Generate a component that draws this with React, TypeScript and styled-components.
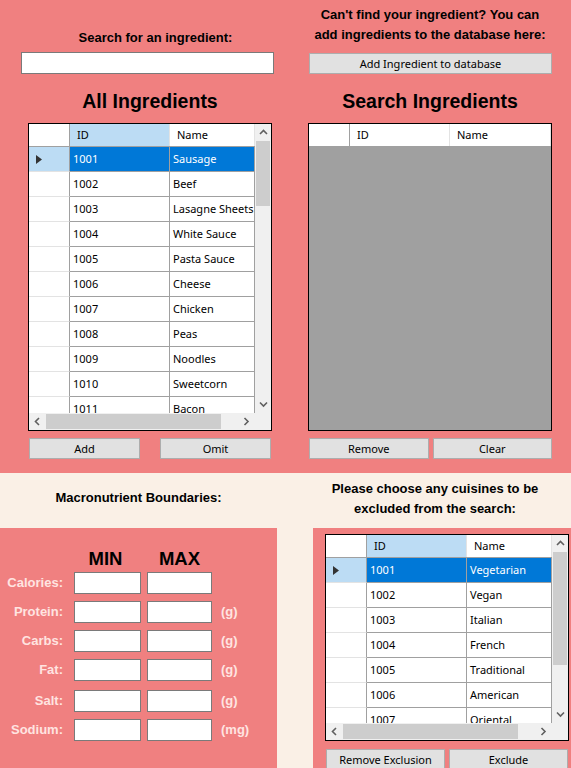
import React from "react";
import styled, { createGlobalStyle } from "styled-components";

const GlobalStyle = createGlobalStyle`
  body {
    margin: 0;
    font-family: "Noto Sans", sans-serif;
  }
  * {
    box-sizing: border-box;
  }
`;

const PINK = "#f08080";
const LINEN = "#faf0e6";
const GRID_LINE = "#a0a0a0";

const Page = styled.div`
  width: 571px;
  height: 768px;
  display: flex;
  flex-direction: column;
  background: ${LINEN};
  overflow: hidden;
`;

const TopSection = styled.div`
  height: 473px;
  flex-shrink: 0;
  background: ${PINK};
  display: grid;
  grid-template-columns: 290px 1fr;
`;

const Column = styled.div<{ $pad: number; $top?: number }>`
  display: flex;
  flex-direction: column;
  padding-left: ${p => p.$pad}px;
  padding-top: ${p => p.$top || 0}px;
`;

const Prompt = styled.div<{ $shift?: number }>`
  width: 244px;
  font: bold 13px/16px "Liberation Sans", Arial, sans-serif;
  color: #000;
  text-align: center;
  padding-left: ${p => p.$shift || 0}px;
`;

const TwoLinePrompt = styled(Prompt)`
  line-height: 20px;
`;

const SearchBox = styled.input`
  width: 253px;
  height: 22px;
  margin: 6px 0 0 -7px;
  border: 1px solid #7a7a7a;
  background: #fff;
  outline: none;
`;

const Heading = styled.h2`
  width: 244px;
  margin: 15px 0 0;
  font: bold 19.5px/24px "Liberation Sans", Arial, sans-serif;
  color: #000;
  text-align: center;
`;

const WinButton = styled.button`
  height: 21px;
  padding: 0;
  background: #e1e1e1;
  border: 1px solid #adadad;
  font: 11px/19px "Noto Sans", sans-serif;
  color: #000;
`;

const WideButton = styled(WinButton)`
  width: 243px;
  margin: 8px 0 0 1px;
`;

const ButtonRow = styled.div<{ $gap: number; $width: number; $top: number }>`
  display: grid;
  grid-template-columns: 1fr 1fr;
  column-gap: ${p => p.$gap}px;
  width: ${p => p.$width}px;
  margin: ${p => p.$top}px 0 0 1px;
`;

/* ---------- data grid ---------- */

const Frame = styled.div<{ $height: number; $scroll: boolean; $empty: boolean }>`
  width: 244px;
  height: ${p => p.$height}px;
  margin-top: 10px;
  border: 1px solid #000;
  display: grid;
  grid-template-columns: 1fr ${p => (p.$scroll ? 16 : 0)}px;
  grid-template-rows: 1fr ${p => (p.$scroll ? 17 : 0)}px;
  background: ${p => (p.$empty ? "#a0a0a0" : "#fff")};
  overflow: hidden;
`;

const Viewport = styled.div`
  overflow: hidden;
  min-width: 0;
  min-height: 0;
`;

const HeaderRow = styled.div`
  display: flex;
  height: 23px;
  border-bottom: 1px solid ${GRID_LINE};
  background: #fff;
`;

const HeaderCell = styled.div<{ $w: number; $active?: boolean; $corner?: boolean }>`
  width: ${p => p.$w}px;
  flex-shrink: 0;
  padding-left: ${p => (p.$corner ? 0 : 7)}px;
  background: ${p => (p.$active ? "#bcdcf4" : "#fff")};
  border-right: 1px solid ${p => (p.$corner ? GRID_LINE : "#e3e3e3")};
  font: 11px/22px "Noto Sans", sans-serif;
  color: #000;
  white-space: nowrap;
  overflow: hidden;
`;

const Row = styled.div`
  display: flex;
  height: 25px;
`;

const RowHeader = styled.div<{ $selected: boolean }>`
  width: 41px;
  flex-shrink: 0;
  display: flex;
  align-items: center;
  padding-left: 7px;
  background: ${p => (p.$selected ? "#bcdcf4" : "#fff")};
  border-right: 1px solid ${GRID_LINE};
  border-bottom: 1px solid #e3e3e3;
`;

const Cell = styled.div<{ $w: number; $selected: boolean }>`
  width: ${p => p.$w}px;
  flex-shrink: 0;
  padding-left: 3px;
  background: ${p => (p.$selected ? "#0078d7" : "#fff")};
  color: ${p => (p.$selected ? "#fff" : "#000")};
  border-right: 1px solid ${GRID_LINE};
  border-bottom: 1px solid ${GRID_LINE};
  font: 11px/24px "Noto Sans", sans-serif;
  white-space: nowrap;
  overflow: hidden;
`;

const VScroll = styled.div`
  display: flex;
  flex-direction: column;
  background: #f0f0f0;
  min-height: 0;
`;

const HScroll = styled.div`
  display: flex;
  background: #f0f0f0;
  min-width: 0;
`;

const ArrowBox = styled.div`
  width: 16px;
  height: 17px;
  flex-shrink: 0;
  display: flex;
  align-items: center;
  justify-content: center;
`;

const HArrowBox = styled(ArrowBox)`
  width: 17px;
`;

const VThumb = styled.div<{ $size: number }>`
  height: ${p => p.$size}px;
  margin: 0 1px;
  background: #cdcdcd;
`;

const HThumb = styled.div<{ $size: number }>`
  width: ${p => p.$size}px;
  margin: 1px 0;
  background: #cdcdcd;
`;

const Spacer = styled.div`
  flex: 1;
`;

const Corner = styled.div`
  background: #f0f0f0;
`;

type Dir = "up" | "down" | "left" | "right";

const chevrons: Record<Dir, string> = {
  up: "1,5 4.5,1.5 8,5",
  down: "1,1.5 4.5,5 8,1.5",
  left: "5,1 1.5,4.5 5,8",
  right: "1.5,1 5,4.5 1.5,8",
};

const Chevron = ({ dir }: { dir: Dir }) => {
  const vertical = dir === "up" || dir === "down";
  return (
    <svg width={vertical ? 9 : 7} height={vertical ? 7 : 9} viewBox={vertical ? "0 0 9 7" : "0 0 7 9"}>
      <polyline points={chevrons[dir]} fill="none" stroke="#606060" strokeWidth="1.6" />
    </svg>
  );
};

const Pointer = () => (
  <svg width="6" height="9" viewBox="0 0 6 9">
    <polygon points="0,0 6,4.5 0,9" fill="#333" />
  </svg>
);

type Col = { title: string; width: number; active?: boolean };

type GridProps = {
  columns: Col[];
  rows?: string[][];
  selected?: number;
  height: number;
  vThumb?: number;
  hThumb?: number;
};

const DataGrid = ({ columns, rows = [], selected = 0, height, vThumb, hThumb }: GridProps) => {
  const scroll = vThumb !== undefined;
  return (
    <Frame $height={height} $scroll={scroll} $empty={rows.length === 0}>
      <Viewport>
        <HeaderRow>
          <HeaderCell $w={41} $corner />
          {columns.map(c => (
            <HeaderCell key={c.title} $w={c.width} $active={c.active}>
              {c.title}
            </HeaderCell>
          ))}
        </HeaderRow>
        {rows.map((r, i) => (
          <Row key={r[0]}>
            <RowHeader $selected={i === selected}>{i === selected ? <Pointer /> : null}</RowHeader>
            {columns.map((c, j) => (
              <Cell key={c.title} $w={c.width} $selected={i === selected}>
                {r[j]}
              </Cell>
            ))}
          </Row>
        ))}
      </Viewport>
      {scroll ? (
        <>
          <VScroll>
            <ArrowBox>
              <Chevron dir="up" />
            </ArrowBox>
            <VThumb $size={vThumb || 0} />
            <Spacer />
            <ArrowBox>
              <Chevron dir="down" />
            </ArrowBox>
          </VScroll>
          <HScroll>
            <HArrowBox>
              <Chevron dir="left" />
            </HArrowBox>
            <HThumb $size={hThumb || 0} />
            <Spacer />
            <HArrowBox>
              <Chevron dir="right" />
            </HArrowBox>
          </HScroll>
          <Corner />
        </>
      ) : null}
    </Frame>
  );
};

/* ---------- bottom ---------- */

const BottomSection = styled.div`
  flex: 1;
  display: grid;
  grid-template-columns: 277px 1fr;
  column-gap: 22px;
`;

const BottomColumn = styled.div`
  display: flex;
  flex-direction: column;
`;

const BottomPrompt = styled.div<{ $top: number; $lh: number }>`
  height: 55px;
  flex-shrink: 0;
  padding-top: ${p => p.$top}px;
  font: bold 13px/${p => p.$lh}px "Liberation Sans", Arial, sans-serif;
  color: #000;
  text-align: center;
`;

const MacroPanel = styled.div`
  flex: 1;
  background: ${PINK};
  padding-top: 20px;
  display: flex;
  flex-direction: column;
  gap: 7px;
`;

const LimitHeader = styled.div`
  display: flex;
  height: 22px;
  margin: 0 0 -5px 72px;
  font: bold 18.5px/22px "Liberation Sans", Arial, sans-serif;
  color: #000;
`;

const LimitTitle = styled.div<{ $w: number }>`
  width: ${p => p.$w}px;
  text-align: center;
  & + & {
    margin-left: 8px;
  }
`;

const FieldRow = styled.div<{ $nudge?: number }>`
  display: flex;
  align-items: center;
  height: 22px;
  margin-top: ${p => p.$nudge || 0}px;
`;

const FieldLabel = styled.label`
  width: 64px;
  padding-right: 1px;
  text-align: right;
  font: bold 13px/16px "Liberation Sans", Arial, sans-serif;
  color: #ffe4e1;
`;

const NumberBox = styled.input<{ $w: number }>`
  width: ${p => p.$w}px;
  height: 22px;
  margin-left: ${p => (p.$w === 67 ? 10 : 6)}px;
  border: 1px solid #7a7a7a;
  background: #fff;
  outline: none;
`;

const Unit = styled.span`
  margin-left: 9px;
  font: bold 13px/16px "Liberation Sans", Arial, sans-serif;
  color: #ffe4e1;
`;

const CuisinePanel = styled.div`
  flex: 1;
  margin-left: 14px;
  background: ${PINK};
  padding: 6px 0 0 12px;
  display: flex;
  flex-direction: column;
  & > div:first-child {
    margin-top: 0;
  }
`;

const ingredients = [
  ["1001", "Sausage"],
  ["1002", "Beef"],
  ["1003", "Lasagne Sheets"],
  ["1004", "White Sauce"],
  ["1005", "Pasta Sauce"],
  ["1006", "Cheese"],
  ["1007", "Chicken"],
  ["1008", "Peas"],
  ["1009", "Noodles"],
  ["1010", "Sweetcorn"],
  ["1011", "Bacon"],
];

const cuisines = [
  ["1001", "Vegetarian"],
  ["1002", "Vegan"],
  ["1003", "Italian"],
  ["1004", "French"],
  ["1005", "Traditional"],
  ["1006", "American"],
  ["1007", "Oriental"],
];

const macros = [
  { label: "Calories:", unit: "" },
  { label: "Protein:", unit: "(g)" },
  { label: "Carbs:", unit: "(g)" },
  { label: "Fat:", unit: "(g)" },
  { label: "Salt:", unit: "(g)", nudge: 2 },
  { label: "Sodium:", unit: "(mg)" },
];

const listColumns: Col[] = [
  { title: "ID", width: 100, active: true },
  { title: "Name", width: 85 },
];

export default function App() {
  return (
    <Page>
      <GlobalStyle />
      <TopSection>
        <Column $pad={28} $top={30}>
          <Prompt $shift={11}>Search for an ingredient:</Prompt>
          <SearchBox type="text" />
          <Heading>All Ingredients</Heading>
          <DataGrid columns={listColumns} rows={ingredients} height={308} vThumb={65} hThumb={175} />
          <ButtonRow $gap={20} $width={242} $top={7}>
            <WinButton>Add</WinButton>
            <WinButton>Omit</WinButton>
          </ButtonRow>
        </Column>
        <Column $pad={18} $top={5}>
          <TwoLinePrompt>
            Can't find your ingredient? You can
            <br />
            add ingredients to the database here:
          </TwoLinePrompt>
          <WideButton>Add Ingredient to database</WideButton>
          <Heading>Search Ingredients</Heading>
          <DataGrid
            columns={[
              { title: "ID", width: 100 },
              { title: "Name", width: 101 },
            ]}
            height={308}
          />
          <ButtonRow $gap={4} $width={243} $top={7}>
            <WinButton>Remove</WinButton>
            <WinButton>Clear</WinButton>
          </ButtonRow>
        </Column>
      </TopSection>
      <BottomSection>
        <BottomColumn>
          <BottomPrompt $top={17} $lh={16}>
            Macronutrient Boundaries:
          </BottomPrompt>
          <MacroPanel>
            <LimitHeader>
              <LimitTitle $w={67}>MIN</LimitTitle>
              <LimitTitle $w={65}>MAX</LimitTitle>
            </LimitHeader>
            {macros.map(m => (
              <FieldRow key={m.label} $nudge={m.nudge}>
                <FieldLabel>{m.label}</FieldLabel>
                <NumberBox $w={67} type="text" />
                <NumberBox $w={65} type="text" />
                {m.unit ? <Unit>{m.unit}</Unit> : null}
              </FieldRow>
            ))}
          </MacroPanel>
        </BottomColumn>
        <BottomColumn>
          <BottomPrompt $top={6} $lh={20}>
            Please choose any cuisines to be
            <br />
            excluded from the search:
          </BottomPrompt>
          <CuisinePanel>
            <DataGrid columns={listColumns} rows={cuisines} height={207} vThumb={113} hThumb={175} />
            <ButtonRow $gap={4} $width={242} $top={8}>
              <WinButton>Remove Exclusion</WinButton>
              <WinButton>Exclude</WinButton>
            </ButtonRow>
          </CuisinePanel>
        </BottomColumn>
      </BottomSection>
    </Page>
  );
}
